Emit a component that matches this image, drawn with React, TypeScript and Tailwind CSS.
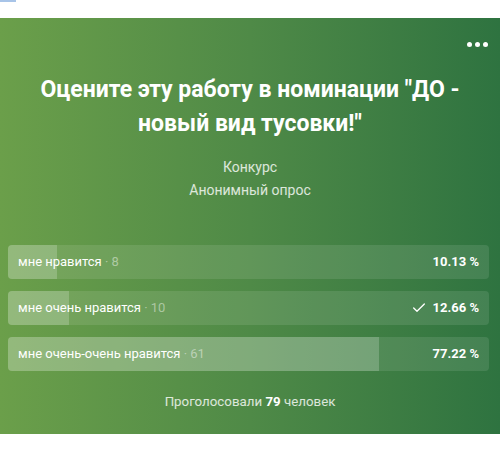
import { Check } from "lucide-react";

type Option = { label: string; count: number; percent: number; voted?: boolean };

const options: Option[] = [
  { label: "мне нравится", count: 8, percent: 10.13 },
  { label: "мне очень нравится", count: 10, percent: 12.66, voted: true },
  { label: "мне очень-очень нравится", count: 61, percent: 77.22 },
];

export default function App() {
  return (
    <div className="h-[450px] w-[500px] bg-white font-['Roboto',sans-serif]">
      <div className="h-[18px]">
        <div className="h-[2px] w-4 bg-[#a8c4e8]" />
      </div>
      <div className="relative h-[416px] bg-gradient-to-r from-[#6b9f4a] via-[#4f8a47] to-[#2e7340] px-2 pt-[55px] text-white">
        <button className="absolute right-[8px] top-[20px] flex gap-[3px] p-1">
          <span className="h-[5px] w-[5px] rounded-full bg-white" />
          <span className="h-[5px] w-[5px] rounded-full bg-white" />
          <span className="h-[5px] w-[5px] rounded-full bg-white" />
        </button>

        <h1 className="px-6 text-center text-[23px] font-bold leading-[34px]">
          Оцените эту работу в номинации "ДО - новый вид тусовки!"
        </h1>
        <div className="mt-[15px] text-center text-[14px] leading-[23px] text-white/80">
          <div>Конкурс</div>
          <div>Анонимный опрос</div>
        </div>

        <ul className="mt-[43px] flex w-[481px] flex-col gap-3">
          {options.map((o) => (
            <li
              key={o.label}
              className="relative flex h-[34px] items-center overflow-hidden rounded bg-white/10 pl-[10px] pr-[10px] text-[13px]"
            >
              <div
                className="absolute inset-y-0 left-0 bg-white/20"
                style={{ width: `${o.percent}%` }}
              />
              <span className="relative flex-1">
                {o.label}
                <span className="text-white/45"> · {o.count}</span>
              </span>
              <span className="relative flex items-center gap-[6px] font-bold">
                {o.voted && <Check size={16} strokeWidth={2} />}
                {o.percent.toFixed(2)} %
              </span>
            </li>
          ))}
        </ul>

        <p className="mt-[21px] text-center text-[13.3px] leading-5 text-white/80">
          Проголосовали <b className="text-white">79</b> человек
        </p>
      </div>
    </div>
  );
}
